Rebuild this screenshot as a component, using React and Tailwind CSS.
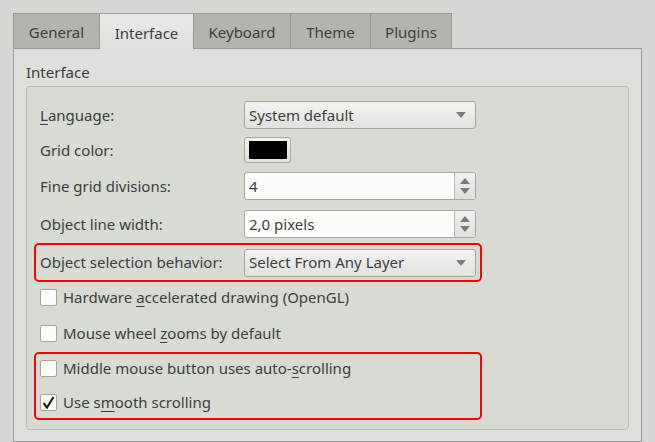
import React from "react";

const font = { fontFamily: '"Noto Sans", "Open Sans", sans-serif' };

function Tab({ label, active, w }) {
  return (
    <div
      className={
        "flex items-center justify-center pt-[3px] border-l border-t border-r border-[#999a95] -ml-px first:ml-0 text-[15px] text-[#3b3e40] " +
        (active
          ? "h-[36px] -mb-px bg-gradient-to-b from-[#eaebe7] to-[#dfe0dc] relative z-10"
          : "h-[35px] bg-[#b3b4ae]")
      }
      style={{ width: w }}
    >
      {label}
    </div>
  );
}

function Arrow({ up, className = "" }) {
  return (
    <svg width="10" height="6" viewBox="0 0 10 6" className={className}>
      {up ? <path d="M0 6 L5 0 L10 6 Z" fill="#7b7c79" /> : <path d="M0 0 L10 0 L5 6 Z" fill="#7b7c79" />}
    </svg>
  );
}

function Combo({ text }) {
  return (
    <div className="w-[232px] h-[28px] flex items-center justify-between pl-[4px] pr-[9px] rounded-[3px] border border-[#a6a8a3] bg-gradient-to-b from-[#f3f4f1] to-[#e1e2de] text-[15px] text-[#3b3e40]">
      <span>{text}</span>
      <Arrow />
    </div>
  );
}

function Spin({ text }) {
  return (
    <div className="w-[232px] h-[28px] flex rounded-[3px] border border-[#a6a8a3] bg-[#fcfcfa] overflow-hidden text-[15px] text-[#3b3e40]">
      <div className="flex-1 flex items-center pl-[4px]">{text}</div>
      <div className="w-[21px] border-l border-[#b8bab5] bg-gradient-to-b from-[#f0f1ee] to-[#e0e1dd] flex flex-col items-center justify-center gap-[4px]">
        <Arrow up />
        <Arrow />
      </div>
    </div>
  );
}

function Row({ label, children, className = "" }) {
  return (
    <div className={"flex items-center " + className}>
      <div className="w-[204px] text-[15px] text-[#3b3e40] whitespace-nowrap">{label}</div>
      {children}
    </div>
  );
}

function Check({ checked, children, className = "" }) {
  return (
    <div className={"flex items-center h-[17px] " + className}>
      <div className="w-[17px] h-[17px] rounded-[2px] border border-[#a3a5a0] bg-[#fcfcfa] flex items-center justify-center">
        {checked && (
          <svg width="13" height="13" viewBox="0 0 13 13">
            <path d="M1.5 7 L5 11.5 L11.5 1" fill="none" stroke="#1e1f20" strokeWidth="2.2" strokeLinejoin="miter" />
          </svg>
        )}
      </div>
      <span className="ml-[6px] text-[15px] text-[#3b3e40] whitespace-nowrap">{children}</span>
    </div>
  );
}

const U = ({ children }) => <u className="underline decoration-1 underline-offset-[3px]">{children}</u>;

export default function App() {
  return (
    <div className="w-[655px] h-[442px] bg-[#d6d7d2] overflow-hidden pt-[13px] pl-[13px] pr-[13px] flex flex-col" style={font}>
      <div className="flex items-end">
        <Tab label="General" w={87} />
        <Tab label="Interface" w={95} active />
        <Tab label="Keyboard" w={98} />
        <Tab label="Theme" w={81} />
        <Tab label="Plugins" w={82} />
      </div>
      <div className="flex-1 border border-[#999a95] bg-[#dfe0dc] pt-[13px] pl-[12px] pr-[12px]">
        <div className="text-[15px] text-[#3b3e40] leading-[20px]">Interface</div>
        <div className="mt-[4px] h-[344px] rounded-[4px] border border-[#babcb7] bg-[#d8dad4] pl-[7px] pt-[14px]">
          <Row label={<><U>L</U>anguage:</>} className="pl-[6px]">
            <Combo text="System default" />
          </Row>
          <Row label="Grid color:" className="pl-[6px] mt-[8px]">
            <div className="w-[47px] h-[26px] rounded-[3px] border border-[#a6a8a3] bg-gradient-to-b from-[#f3f4f1] to-[#e1e2de] flex items-center justify-center">
              <div className="w-[38px] h-[18px] bg-black" />
            </div>
          </Row>
          <Row label="Fine grid divisions:" className="pl-[6px] mt-[9px]">
            <Spin text="4" />
          </Row>
          <Row label="Object line width:" className="pl-[6px] mt-[10px]">
            <Spin text="2,0 pixels" />
          </Row>
          <div className="mt-[5px] w-[448px] h-[39px] border-2 border-[#ff0000] rounded-[5px] pl-[4px] flex items-center">
            <Row label="Object selection behavior:">
              <Combo text="Select From Any Layer" />
            </Row>
          </div>
          <Check className="ml-[6px] mt-[7px]">
            Hardware <U>a</U>ccelerated drawing (OpenGL)
          </Check>
          <Check className="ml-[6px] mt-[19px]">
            Mouse wheel <U>z</U>ooms by default
          </Check>
          <div className="mt-[10px] w-[448px] h-[68px] border-2 border-[#ff0000] rounded-[5px] pl-[4px] pt-[6px]">
            <Check>
              Middle mouse button uses auto-<U>s</U>crolling
            </Check>
            <Check checked className="mt-[17px]">
              Use s<U>m</U>ooth scrolling
            </Check>
          </div>
        </div>
      </div>
    </div>
  );
}
